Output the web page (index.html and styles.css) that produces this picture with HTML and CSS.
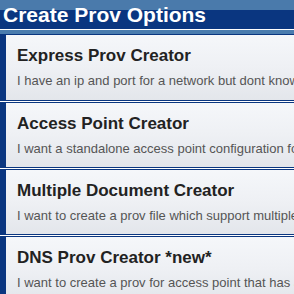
FILE: index.html
```html
<!DOCTYPE html>
<html>
<head>
<meta charset="utf-8">
<link rel="stylesheet" href="styles.css">
</head>
<body>
<div class="page">
  <div class="header"><h1 class="header-title">Create Prov Options</h1></div>
  <div class="band"></div>
  <ul class="options">
    <li class="option first">
      <div class="card">
        <div class="card-title">Express Prov Creator</div>
        <div class="card-desc">I have an ip and port for a network but dont know how to set it up</div>
      </div>
    </li>
    <li class="option">
      <div class="card">
        <div class="card-title">Access Point Creator</div>
        <div class="card-desc">I want a standalone access point configuration for my device</div>
      </div>
    </li>
    <li class="option">
      <div class="card">
        <div class="card-title">Multiple Document Creator</div>
        <div class="card-desc">I want to create a prov file which support multiple documents</div>
      </div>
    </li>
    <li class="option">
      <div class="card">
        <div class="card-title">DNS Prov Creator *new*</div>
        <div class="card-desc">I want to create a prov for access point that has a DNS name</div>
      </div>
    </li>
  </ul>
</div>
</body>
</html>
```

FILE: styles.css
```css
html, body {
  margin: 0;
  padding: 0;
  background: #0a3680;
  overflow: hidden;
}
.page {
  width: 294px;
  overflow: hidden;
  font-family: "Liberation Sans", Arial, sans-serif;
}
.header {
  height: 29px;
  background: linear-gradient(to bottom, #4a7aab 0, #4a7aab 10px, #0a3680 10px, #0a3680 100%);
  border-bottom: 1px solid #ffffff;
  display: flex;
  align-items: center;
}
.header-title {
  margin: 0;
  padding-left: 3px;
  color: #ffffff;
  font-size: 21px;
  font-weight: bold;
  white-space: nowrap;
  line-height: 21px;
  margin-top: 0;
}
.band {
  height: 4px;
  background: #4a7cae;
}
.options {
  list-style: none;
  margin: 0;
  padding: 0;
}
.option {
  background: #0a3680;
  padding: 1px 0;
  border-bottom: 1px solid #ffffff;
}
.card {
  margin-left: 6px;
  height: 64px;
  box-sizing: border-box;
  padding: 11px 0 0 11px;
  background: linear-gradient(to bottom, #f5f7fa 0%, #eef0f4 50%, #e3e6eb 100%);
  white-space: nowrap;
  overflow: hidden;
}
.first .card {
  height: 65px;
}
.card-title {
  font-size: 17px;
  font-weight: bold;
  color: #222222;
  line-height: 19px;
}
.card-desc {
  margin-top: 8px;
  font-size: 13px;
  color: #555555;
  line-height: 15px;
}
```
